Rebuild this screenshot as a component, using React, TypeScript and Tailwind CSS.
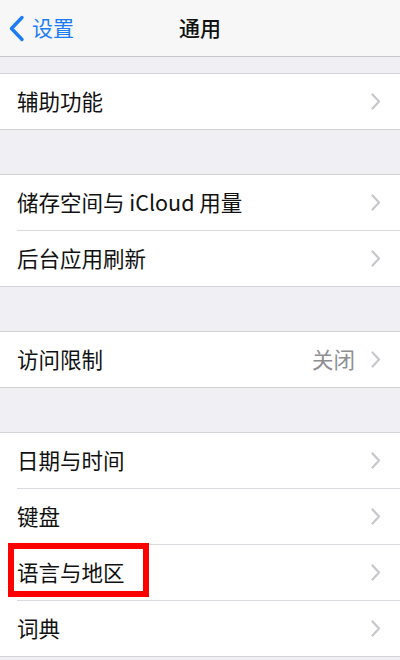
import type { ReactNode } from "react"

const font = { fontFamily: '"Noto Sans CJK SC", "Noto Sans", sans-serif' }

function Chevron() {
  return (
    <svg width="10" height="17" viewBox="0 0 10 17" className="shrink-0">
      <path d="M1.5 1.5 L8 8.5 L1.5 15.5" fill="none" stroke="#c7c7cc" strokeWidth="2.2" strokeLinecap="round" strokeLinejoin="round" />
    </svg>
  )
}

function Row({ label, value, last, children }: { label: string; value?: string; last?: boolean; children?: ReactNode }) {
  return (
    <div className="relative pl-[17px]">
      <div className={`flex items-center pr-[19px] ${last ? "h-[55px]" : "h-[56px] border-b border-[#d9d9de]"}`}>
        <span className="flex-1 text-[21.5px] text-[#111]">{label}</span>
        {value && <span className="mr-[16px] text-[21.5px] text-[#8e8e93]">{value}</span>}
        <Chevron />
      </div>
      {children}
    </div>
  )
}

function Group({ children }: { children: ReactNode }) {
  return <div className="border-y border-[#d1d1d6] bg-white">{children}</div>
}

export default function App() {
  return (
    <div className="flex h-[660px] w-[400px] flex-col overflow-hidden bg-[#efeff4]" style={font}>
      <div className="relative flex h-[57px] shrink-0 items-center justify-center border-b border-[#c8c7cc] bg-[#f7f7f7]">
        <div className="absolute left-[8px] top-0 flex h-full items-center gap-[7px] text-[#1b7cf5]">
          <svg width="17" height="27" viewBox="0 0 17 27">
            <path d="M14 2.5 L3.5 13.5 L14 24.5" fill="none" stroke="#1b7cf5" strokeWidth="3.4" strokeLinecap="round" strokeLinejoin="round" />
          </svg>
          <span className="text-[21px]">设置</span>
        </div>
        <span className="text-[21px] font-medium text-[#111]">通用</span>
      </div>

      <div className="h-[16px] shrink-0" />
      <Group>
        <Row label="辅助功能" last />
      </Group>

      <div className="h-[44px] shrink-0" />
      <Group>
        <Row label="储存空间与 iCloud 用量" />
        <Row label="后台应用刷新" last />
      </Group>

      <div className="h-[44px] shrink-0" />
      <Group>
        <Row label="访问限制" value="关闭" last />
      </Group>

      <div className="h-[44px] shrink-0" />
      <Group>
        <Row label="日期与时间" />
        <Row label="键盘" />
        <Row label="语言与地区">
          <div className="absolute left-[8px] top-[-2px] h-[54px] w-[141px] border-[6px] border-[#ff0000]" />
        </Row>
        <Row label="词典" last />
      </Group>
    </div>
  )
}
